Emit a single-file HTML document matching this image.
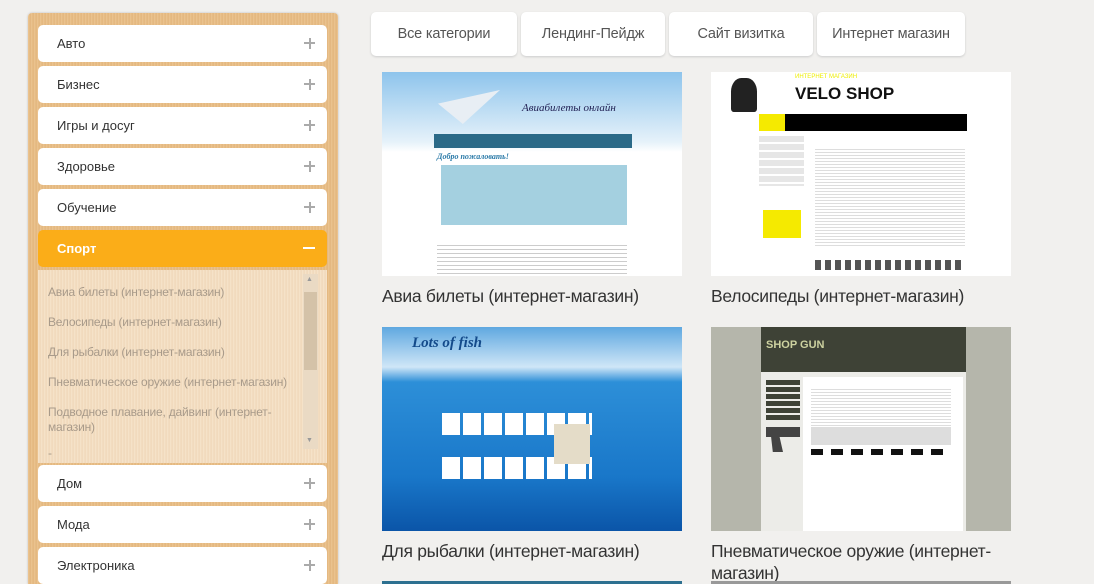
<!DOCTYPE html>
<html><head><meta charset="utf-8"><style>
*{box-sizing:border-box;margin:0;padding:0}
html,body{width:1094px;height:584px;overflow:hidden}
body{background:#f1f0ee;font-family:"Liberation Sans",sans-serif;position:relative}
.side{position:absolute;left:28px;top:13px;width:310px;height:571px;border-radius:4px 4px 0 0;
background:repeating-linear-gradient(90deg,#e3b57c 0,#f0cf9f 1px,#dba86a 2px,#eec898 3px);box-shadow:0 0 2px #bbb}
.it{position:absolute;left:10px;width:289px;height:37px;background:#fff;border-radius:5px;font-size:13px;color:#333;padding:11px 0 0 19px}
.it:before,.it:after{content:"";position:absolute;background:#aaa}
.it:before{right:12px;top:17px;width:11px;height:2px}
.it:after{right:16.5px;top:12.5px;width:2px;height:11px}
.it.on{background:#fbad18;color:#fff;font-weight:bold}
.it.on:before{background:#fff;width:12px}
.it.on:after{display:none}
.sub{position:absolute;left:10px;top:257px;width:289px;height:193px;background:repeating-linear-gradient(90deg,#f3ddc0 0,#f7e6cf 1px,#ecd2b0 2px,#f6e3ca 3px);overflow:hidden}
.sub div{font-size:12px;color:#a89a8a;padding-left:10px;position:absolute;line-height:15px;width:260px;letter-spacing:-.2px;white-space:nowrap}
.sb{position:absolute;right:9px;top:4px;width:15px;height:175px;background:#eadac4}
.sb i{position:absolute;left:1px;top:18px;width:13px;height:78px;background:#d4c2a8}
.sb b{position:absolute;left:3px;font-size:7px;color:#999;font-weight:normal}
.tab{position:absolute;top:12px;height:44px;background:#fff;border-radius:5px;box-shadow:0 1px 2px #ccc;font-size:14.5px;color:#555;text-align:center;line-height:44px;letter-spacing:-.2px}
.th{position:absolute;width:300px;height:204px;overflow:hidden}
.cap{position:absolute;font-size:17.5px;color:#333;letter-spacing:-.3px;line-height:22px}
</style></head><body>
<div class="side">
<div class="it" style="top:12px">Авто</div>
<div class="it" style="top:53px">Бизнес</div>
<div class="it" style="top:94px">Игры и досуг</div>
<div class="it" style="top:135px">Здоровье</div>
<div class="it" style="top:176px">Обучение</div>
<div class="it on" style="top:217px">Спорт</div>
<div class="sub">
<div style="top:15px">Авиа билеты (интернет-магазин)</div>
<div style="top:45px">Велосипеды (интернет-магазин)</div>
<div style="top:75px">Для рыбалки (интернет-магазин)</div>
<div style="top:105px">Пневматическое оружие (интернет-магазин)</div>
<div style="top:135px">Подводное плавание, дайвинг (интернет-<br>магазин)</div>
<div style="top:176px">-</div>
<span class="sb"><b style="top:2px">▲</b><i></i><b style="top:163px">▼</b></span>
</div>
<div class="it" style="top:452px">Дом</div>
<div class="it" style="top:493px">Мода</div>
<div class="it" style="top:534px">Электроника</div>
</div>

<div class="tab" style="left:371px;width:146px">Все категории</div>
<div class="tab" style="left:521px;width:144px">Лендинг-Пейдж</div>
<div class="tab" style="left:669px;width:144px">Сайт визитка</div>
<div class="tab" style="left:817px;width:148px">Интернет магазин</div>

<div class="th" style="left:382px;top:72px;background:linear-gradient(#8ec4ec 0,#e6f2fa 70px,#fff 80px)">
<div style="position:absolute;left:52px;top:62px;width:198px;height:14px;background:#2b6a88"></div>
<div style="position:absolute;left:56px;top:18px;width:62px;height:34px;background:#e8eef4;clip-path:polygon(0 40%,100% 0,40% 100%)"></div>
<div style="position:absolute;left:140px;top:30px;font:italic 11px 'Liberation Serif',serif;color:#225">Авиабилеты онлайн</div>
<div style="position:absolute;left:55px;top:80px;font:italic bold 8px serif;color:#2a7aa8">Добро пожаловать!</div>
<div style="position:absolute;left:59px;top:93px;width:186px;height:60px;background:#a4d0e0"></div>
<div style="position:absolute;left:55px;top:170px;width:190px;height:34px;background:repeating-linear-gradient(#fff 0,#fff 3px,#ccc 3px,#ccc 4px)"></div>
</div>
<div class="cap" style="left:382px;top:285px">Авиа билеты (интернет-магазин)</div>

<div class="th" style="left:711px;top:72px;background:#fff">
<div style="position:absolute;left:20px;top:6px;width:26px;height:34px;background:#222;border-radius:40% 40% 10% 10%"></div>
<div style="position:absolute;left:84px;top:12px;font:bold 17px 'Liberation Sans';color:#111">VELO SHOP</div>
<div style="position:absolute;left:84px;top:2px;font-size:6px;color:#ee0">ИНТЕРНЕТ МАГАЗИН</div>
<div style="position:absolute;left:48px;top:42px;width:208px;height:17px;background:#000"></div>
<div style="position:absolute;left:48px;top:42px;width:26px;height:17px;background:#f5ea00"></div>
<div style="position:absolute;left:48px;top:64px;width:45px;height:50px;background:repeating-linear-gradient(#e6e6e6 0,#e6e6e6 6px,#fff 6px,#fff 8px)"></div>
<div style="position:absolute;left:52px;top:138px;width:38px;height:28px;background:#f5ea00"></div>
<div style="position:absolute;left:104px;top:75px;width:150px;height:100px;background:repeating-linear-gradient(#fff 0,#fff 2px,#ddd 2px,#ddd 3px)"></div>
<div style="position:absolute;left:104px;top:188px;width:150px;height:10px;background:repeating-linear-gradient(90deg,#555 0,#555 6px,#fff 6px,#fff 10px)"></div>
</div>
<div class="cap" style="left:711px;top:285px">Велосипеды (интернет-магазин)</div>

<div class="th" style="left:382px;top:327px;background:linear-gradient(#5fa8e0 0,#cfe6f7 40px,#2d8fd8 55px,#1977c9 150px,#0b55a8 204px)">
<div style="position:absolute;left:30px;top:8px;font:italic bold 15px 'Liberation Serif',serif;color:#134a8a">Lots of fish</div>
<div style="position:absolute;left:60px;top:86px;width:150px;height:22px;background:repeating-linear-gradient(90deg,#fff 0,#fff 18px,transparent 18px,transparent 21px)"></div>
<div style="position:absolute;left:60px;top:130px;width:150px;height:22px;background:repeating-linear-gradient(90deg,#fff 0,#fff 18px,transparent 18px,transparent 21px)"></div>
<div style="position:absolute;left:172px;top:97px;width:36px;height:40px;background:#e4dcc8"></div>
</div>
<div class="cap" style="left:382px;top:540px">Для рыбалки (интернет-магазин)</div>

<div class="th" style="left:711px;top:327px;background:#b5b6ab">
<div style="position:absolute;left:50px;top:0;width:205px;height:45px;background:#3e4236"></div>
<div style="position:absolute;left:55px;top:12px;font:bold 11px 'Liberation Sans';color:#cdd2a0">SHOP GUN</div>
<div style="position:absolute;left:50px;top:45px;width:205px;height:160px;background:#ecece8"></div>
<div style="position:absolute;left:92px;top:50px;width:160px;height:155px;background:#fff"></div>
<div style="position:absolute;left:55px;top:53px;width:34px;height:40px;background:repeating-linear-gradient(#3e4236 0,#3e4236 5px,#ecece8 5px,#ecece8 7px)"></div>
<div style="position:absolute;left:55px;top:100px;width:34px;height:25px;background:#444;clip-path:polygon(0 0,100% 0,100% 40%,40% 40%,50% 100%,20% 100%,15% 40%,0 40%)"></div>
<div style="position:absolute;left:100px;top:60px;width:140px;height:40px;background:repeating-linear-gradient(#fff 0,#fff 2px,#ddd 2px,#ddd 3px)"></div>
<div style="position:absolute;left:100px;top:100px;width:140px;height:18px;background:#ddd"></div>
<div style="position:absolute;left:100px;top:122px;width:140px;height:6px;background:repeating-linear-gradient(90deg,#111 0,#111 12px,#fff 12px,#fff 20px)"></div>
</div>
<div class="cap" style="left:711px;top:540px">Пневматическое оружие (интернет-<br>магазин)</div>
<div style="position:absolute;left:382px;top:581px;width:300px;height:3px;background:#2d7090"></div>
<div style="position:absolute;left:711px;top:581px;width:300px;height:3px;background:#999"></div>
</body></html>
